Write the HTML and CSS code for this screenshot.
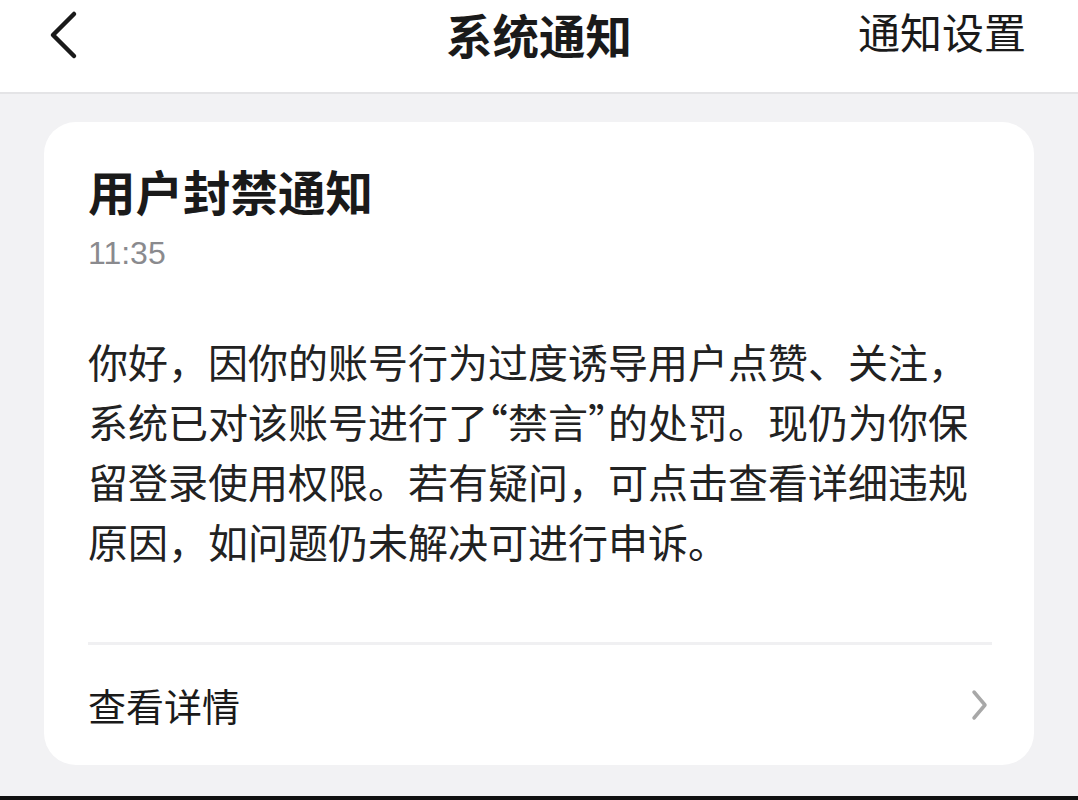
FILE: index.html
```html
<!DOCTYPE html>
<html lang="zh-CN">
<head>
<meta charset="utf-8">
<link rel="stylesheet" href="styles.css">
</head>
<body>
<div class="screen">
  <header class="nav">
    <span class="back">
      <svg width="34" height="50" viewBox="0 0 34 50"><path d="M28 4 L7 25 L28 46" fill="none" stroke="#1a1a1a" stroke-width="4.5" stroke-linecap="round" stroke-linejoin="round"/></svg>
    </span>
    <h1 class="nav-title">系统通知</h1>
    <span class="nav-action">通知设置</span>
  </header>
  <main class="content">
    <section class="card">
      <h2 class="card-title">用户封禁通知</h2>
      <div class="card-time">11:35</div>
      <p class="card-body">你好，因你的账号行为过度诱导用户点赞、关注，系统已对该账号进行了<span class="q">“禁言”</span>的处罚。现仍为你保留登录使用权限。若有疑问，可点击查看详细违规原因，如问题仍未解决可进行申诉。</p>
      <div class="card-footer">
        <span class="detail">查看详情</span>
        <svg class="chev" width="20" height="32" viewBox="0 0 20 32"><path d="M4 3 L15 16 L4 29" fill="none" stroke="#a8a8a8" stroke-width="3.5" stroke-linecap="round" stroke-linejoin="round"/></svg>
      </div>
    </section>
  </main>
  <div class="bottom-bar"></div>
</div>
</body>
</html>
```
FILE: styles.css
```css
html, body {
  margin: 0;
  padding: 0;
}
body {
  width: 1078px;
  height: 800px;
  overflow: hidden;
  background: #f2f2f4;
  font-family: "Noto Sans CJK SC", "Noto Sans", sans-serif;
  color: #1c1c1e;
}
.screen {
  height: 800px;
  display: flex;
  flex-direction: column;
}
.nav {
  flex: none;
  background: #fff;
  border-bottom: 2px solid #e4e4e6;
  position: relative;
  display: flex;
  align-items: center;
  justify-content: space-between;
  padding: 0 54px 22px 46px;
  height: 70px;
}
.back {
  display: flex;
  width: 34px;
  height: 50px;
}
.nav-title {
  position: absolute;
  left: 0;
  right: 0;
  top: 6px;
  margin: 0;
  text-align: center;
  font-size: 46.5px;
  line-height: 56px;
  font-weight: 700;
  color: #1a1a1a;
  pointer-events: none;
}
.nav-action {
  font-size: 42px;
  line-height: 56px;
  color: #1a1a1a;
  font-weight: 400;
  margin-right: -2px;
  margin-bottom: 8px;
}
.content {
  flex: 1;
  padding: 28px 44px 0 44px;
}
.card {
  background: #fff;
  border-radius: 32px;
  padding: 36px 42px 0 44px;
  height: 643px;
  box-sizing: border-box;
  display: flex;
  flex-direction: column;
}
.card-title {
  margin: 0;
  font-size: 47.5px;
  font-weight: 700;
  line-height: 66px;
  color: #1a1a1a;
}
.card-time {
  font-family: "Liberation Sans", "Noto Sans", sans-serif;
  font-size: 32px;
  line-height: 40px;
  color: #8a8a8e;
  margin-top: 9px;
}
.card-body {
  margin: 58px 0 0 0;
  font-size: 40px;
  line-height: 60px;
  color: #222;
  width: 900px;
}
.q {
  display: inline-block;
  font-feature-settings: "halt" 1;
}
.card-footer {
  margin-top: 71px;
  border-top: 3px solid #f0f0f2;
  display: flex;
  align-items: center;
  justify-content: space-between;
  height: 119px;
}
.detail {
  font-size: 38px;
  color: #1a1a1a;
}
.chev {
  margin-right: 2px;
}
.bottom-bar {
  height: 4px;
  background: #111;
  flex: none;
}
```
